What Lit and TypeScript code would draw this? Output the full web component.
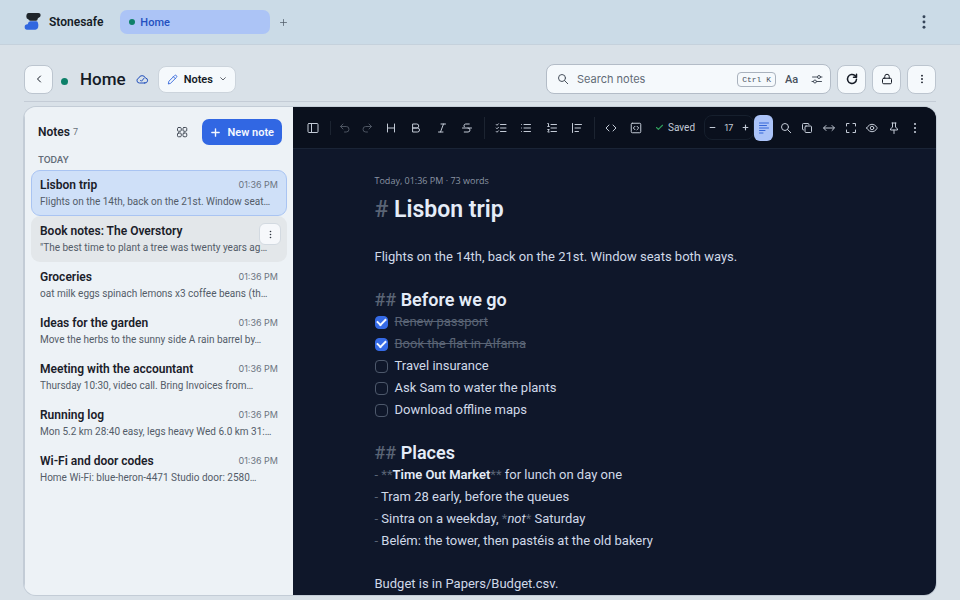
import { LitElement, html, css, svg, nothing } from "lit";
import { customElement, property } from "lit/decorators.js";

const ICONS: Record<string, unknown> = {
  back: svg`<path d="M15 18l-6-6 6-6"/>`,
  down: svg`<path d="M5 8l7 7 7-7"/>`,
  plus: svg`<path d="M12 4v16M4 12h16"/>`,
  minus: svg`<path d="M4 12h16"/>`,
  check: svg`<path d="M20 6L9 17l-5-5"/>`,
  dots: svg`<g fill="currentColor" stroke="none"><circle cx="12" cy="4" r="2.200"/><circle cx="12" cy="12" r="2.200"/><circle cx="12" cy="20" r="2.200"/></g>`,
  cloud: svg`<path d="M17.500 20H7a5 5 0 0 1-1.500-9.800A7 7 0 0 1 18.800 10a5 5 0 0 1-1.300 10z"/><path d="M9 14.500l2 2 5-6"/>`,
  pencil: svg`<path d="M3 21l1.200-5.200L16.500 3.500a2.500 2.500 0 0 1 4 4L8.200 19.800z"/><path d="M14 6l4 4"/>`,
  search: svg`<circle cx="10" cy="10" r="7"/><path d="M21.500 21.500L15 15"/>`,
  sliders: svg`<path d="M3 8h10M19 8h3M2 17h3M11 17h10"/><circle cx="16" cy="8" r="3"/><circle cx="8" cy="17" r="3"/>`,
  refresh: svg`<path d="M21 12.500A9 9 0 1 1 18 5.300l2 2"/><path d="M21 2.500v6h-6"/>`,
  lock: svg`<rect x="3" y="10.500" width="18" height="11" rx="2.500"/><path d="M7.500 10.500V7a4.500 4.500 0 0 1 9 0v3.500"/>`,
  grid: svg`<rect x="3" y="3" width="7.500" height="7.500" rx="2"/><rect x="14" y="3" width="7.500" height="7.500" rx="2"/><rect x="3" y="14" width="7.500" height="7.500" rx="2"/><rect x="14" y="14" width="7.500" height="7.500" rx="2"/>`,
  panel: svg`<rect x="2" y="3" width="20" height="18" rx="2"/><path d="M9 3v18"/>`,
  undo: svg`<path d="M8 14L3 9l5-5"/><path d="M3 9h11.500a5.500 5.500 0 0 1 0 11H11"/>`,
  redo: svg`<path d="M16 14l5-5-5-5"/><path d="M21 9H9.500a5.500 5.500 0 0 0 0 11H13"/>`,
  heading: svg`<path d="M5 4v16M19 4v16M5 12h14"/>`,
  bold: svg`<path d="M6 4h7.500a4 4 0 0 1 0 8H6zM6 12h9a4 4 0 0 1 0 8H6z"/>`,
  italic: svg`<path d="M19 4h-9M14 20H5M15 4L9 20"/>`,
  strike: svg`<path d="M16.500 4H9.500a3.500 3.500 0 0 0-3 5.500M14 12a4 4 0 0 1 0 8H6.500M3 12h18"/>`,
  tasks: svg`<path d="M11 5h11M11 12h11M11 19h11M2.500 5l1.500 1.500 3-3M2.500 12l1.500 1.500 3-3M2.500 19l1.500 1.500 3-3"/>`,
  bullets: svg`<path d="M8 5h13M8 12h13M8 19h13M3 5h.01M3 12h.01M3 19h.01"/>`,
  numbers: svg`<path d="M10 5h11M10 12h11M10 19h11M3.500 3H5v6M3.500 9h3M3.500 15h3L3.500 20h3"/>`,
  quote: svg`<path d="M3 3v18M8 5h13M8 12h11M8 19h7"/>`,
  code: svg`<path d="M8 6l-6 6 6 6M16 6l6 6-6 6"/>`,
  block: svg`<rect x="2.500" y="2.500" width="19" height="19" rx="2"/><path d="M10 8.500L6.500 12l3.500 3.500M14 8.500l3.500 3.500-3.500 3.500"/>`,
  align: svg`<path d="M3 2h18M3 7h14M3 12h18M3 17h11M3 22h7"/>`,
  copy: svg`<rect x="8" y="8" width="13" height="13" rx="2"/><path d="M5 16a2 2 0 0 1-2-2V5a2 2 0 0 1 2-2h9a2 2 0 0 1 2 2"/>`,
  width: svg`<path d="M2 12h20M6 7l-5 5 5 5M18 7l5 5-5 5"/>`,
  expand: svg`<path d="M3 8V3h5M16 3h5v5M21 16v5h-5M8 21H3v-5"/>`,
  eye: svg`<path d="M1.500 12S5 4.500 12 4.500 22.500 12 22.500 12 19 19.500 12 19.500 1.500 12 1.500 12z"/><circle cx="12" cy="12" r="3.500"/>`,
  pin: svg`<path d="M12 16v7M8 2h8M9 2v8l-4 4v2h14v-2l-4-4V2"/>`,
};

@customElement("ui-icon")
class UiIcon extends LitElement {
  @property() name = "";
  static styles = css`
    :host { display: block; width: 12px; height: 12px; flex: none; }
    svg { display: block; width: 100%; height: 100%; fill: none; stroke: currentColor; overflow: visible;
      stroke-width: var(--stroke, 2); stroke-linecap: round; stroke-linejoin: round; }
  `;
  render() {
    return html`<svg viewBox="0 0 24 24" aria-hidden="true">${ICONS[this.name]}</svg>`;
  }
}

interface Note { title: string; text: string; state?: string }

const NOTES: Note[] = [
  { title: "Lisbon trip", text: "Flights on the 14th, back on the 21st. Window seat…", state: "selected" },
  { title: "Book notes: The Overstory", text: "\"The best time to plant a tree was twenty years ag…", state: "hovered" },
  { title: "Groceries", text: "oat milk eggs spinach lemons x3 coffee beans (th…" },
  { title: "Ideas for the garden", text: "Move the herbs to the sunny side A rain barrel by…" },
  { title: "Meeting with the accountant", text: "Thursday 10:30, video call. Bring Invoices from…" },
  { title: "Running log", text: "Mon 5.2 km 28:40 easy, legs heavy Wed 6.0 km 31:…" },
  { title: "Wi-Fi and door codes", text: "Home Wi-Fi: blue-heron-4471 Studio door: 2580…" },
];

const TASKS: [string, boolean][] = [
  ["Renew passport", true],
  ["Book the flat in Alfama", true],
  ["Travel insurance", false],
  ["Ask Sam to water the plants", false],
  ["Download offline maps", false],
];

const tool = (name: string, label: string, cls = "") =>
  html`<button class="tool ${cls}" aria-label=${label} ?disabled=${cls === "off"}><ui-icon name=${name}></ui-icon></button>`;

@customElement("note-list")
class NoteList extends LitElement {
  static styles = css`
    :host { display: block; background: #edf2f6; color: #1a2029; border-left: 1px solid #c3ccd6; }
    * { box-sizing: border-box; }
    button { font: inherit; color: inherit; border: 0; background: none; padding: 0; margin: 0; }
    .head { display: flex; align-items: center; padding: 12px 11px 0 13px; }
    h2 { margin: 0; font-size: 12px; font-weight: 600; }
    .count { margin-left: 3px; font-size: 9px; color: #68717c; }
    .grid { margin-left: auto; width: 26px; height: 26px; display: grid; place-items: center; color: #434b57; }
    .new { margin-left: 7px; height: 26px; padding: 0 8px; display: flex; align-items: center; gap: 6px;
      border-radius: 7px; background: #3167e3; color: #f4f8ff; font-size: 11px; font-weight: 600; --stroke: 3; }
    .new ui-icon { width: 11px; height: 11px; }
    h3 { margin: 9px 13px 4px; font: 600 9px/12px Inter, sans-serif; color: #636c78; }
    ul { list-style: none; margin: 0; padding: 0 6px; }
    li { position: relative; padding: 7px 8px 6px; border: 1px solid transparent; border-radius: 9px; }
    .selected { background: #cfe0f8; border-color: #a9c4f2; }
    .hovered { background: #e3e7ea; }
    .row { display: flex; align-items: center; justify-content: space-between; margin-bottom: 3px; }
    .title { font-size: 12px; line-height: 14px; font-weight: 600; }
    time { font: 9px/14px Inter, sans-serif; color: #6b7481; }
    .text { font-size: 10px; line-height: 14px; color: #535c68; white-space: nowrap; overflow: hidden; margin: 0; }
    .more { position: absolute; right: 5px; top: 6px; width: 22px; height: 22px; display: grid; place-items: center;
      border: 1px solid #d3dae1; border-radius: 6px; background: #f6f8fb; color: #323943; }
    .more ui-icon { width: 9px; height: 9px; }
  `;
  render() {
    return html`
      <div class="head">
        <h2>Notes</h2><span class="count">7</span>
        <button class="grid" aria-label="Grid view"><ui-icon name="grid"></ui-icon></button>
        <button class="new"><ui-icon name="plus"></ui-icon>New note</button>
      </div>
      <h3>TODAY</h3>
      <ul>
        ${NOTES.map((n) => html`
          <li class=${n.state ?? ""}>
            <div class="row">
              <span class="title">${n.title}</span>
              ${n.state === "hovered" ? nothing : html`<time>01:36 PM</time>`}
            </div>
            <p class="text">${n.text}</p>
            ${n.state === "hovered"
              ? html`<button class="more" aria-label="Note actions"><ui-icon name="dots"></ui-icon></button>`
              : nothing}
          </li>`)}
      </ul>`;
  }
}

@customElement("note-editor")
class NoteEditor extends LitElement {
  static styles = css`
    :host { display: block; background: #0f172a; color: #cfd9e8; min-width: 0; }
    * { box-sizing: border-box; }
    button { font: inherit; color: inherit; border: 0; background: none; padding: 0; margin: 0; }
    .bar { display: flex; align-items: center; height: 42px; padding: 0 10px 0 7px; background: #0a101d;
      border-bottom: 1px solid #1a2436; color: #c3cad6; }
    .tool { flex: 1; height: 26px; display: grid; place-items: center; }
    .off { color: #4d5562; }
    .one { display: flex; width: 26px; }
    .pair { display: flex; width: 44px; }
    .four { display: flex; width: 102px; }
    .two { display: flex; width: 51px; }
    .seven { display: flex; width: 151px; margin-left: 2px; }
    .sep { width: 1px; height: 22px; margin: 0 3px 0 4px; background: #1c2431; }
    .short { height: 14px; }
    .saved { display: flex; align-items: center; gap: 4px; margin-left: 6px; font-size: 10px; }
    .saved ui-icon { width: 9px; height: 9px; color: #2f9e5b; --stroke: 3; }
    .size { display: flex; align-items: center; justify-content: space-between; width: 50px; height: 25px;
      margin-left: auto; padding: 0 4px; border: 1px solid #161f2d; border-radius: 8px; font: 9px Inter, sans-serif; }
    .size ui-icon { width: 7px; height: 7px; --stroke: 4; }
    .on { flex: none; width: 19px; border-radius: 6px; background: #abc3f8; color: #3566d8; }
    article { width: 480px; max-width: 100%; margin: 0 auto; padding-top: 25px; font-size: 13px; line-height: 22px; }
    .meta { margin: 0; font: 9px/14px "Open Sans", sans-serif; color: #8a94a3; }
    h1, h2, p, ul { margin: 0; padding: 0; font-weight: 400; }
    h1 { margin: 8px 0 22px; font-size: 23px; line-height: 28px; font-weight: 600; color: #e4ecf8; }
    h2 { margin-top: 21px; font-size: 18px; line-height: 22px; font-weight: 600; color: #e4ecf8; }
    .last { margin-top: 21px; }
    .mark { color: #5a6475; font-weight: 400; }
    h1 .mark, h2 .mark { font-weight: 500; }
    strong { font-weight: 600; color: #e4ecf8; }
    ul { list-style: none; }
    .task { display: flex; align-items: center; gap: 7px; height: 22px; }
    .done { color: #5a6475; text-decoration: line-through; }
    input { appearance: none; flex: none; width: 13px; height: 13px; margin: 0; display: grid; place-items: center;
      border: 1px solid #4d586b; border-radius: 4px; }
    input:checked { background: #356ae6; border-color: #356ae6; }
    input:checked::before { content: ""; width: 7px; height: 4px; margin-bottom: 2px; border: solid #f4f8ff;
      border-width: 0 0 2px 2px; transform: rotate(-45deg); }
  `;
  render() {
    return html`
      <div class="bar" role="toolbar">
        <div class="one">${tool("panel", "Toggle list")}</div>
        <span class="sep short"></span>
        <div class="pair">${tool("undo", "Undo", "off")}${tool("redo", "Redo", "off")}</div>
        <div class="four">${tool("heading", "Heading")}${tool("bold", "Bold")}${tool("italic", "Italic")}${tool("strike", "Strikethrough")}</div>
        <span class="sep"></span>
        <div class="four">${tool("tasks", "Task list")}${tool("bullets", "Bulleted list")}${tool("numbers", "Numbered list")}${tool("quote", "Quote")}</div>
        <span class="sep"></span>
        <div class="two">${tool("code", "Code")}${tool("block", "Code block")}</div>
        <span class="saved"><ui-icon name="check"></ui-icon>Saved</span>
        <div class="size">
          <button aria-label="Smaller text"><ui-icon name="minus"></ui-icon></button>17
          <button aria-label="Larger text"><ui-icon name="plus"></ui-icon></button>
        </div>
        ${tool("align", "Formatted view", "on")}
        <div class="seven">
          ${tool("search", "Find")}${tool("copy", "Copy")}${tool("width", "Full width")}${tool("expand", "Full screen")}
          ${tool("eye", "Preview")}${tool("pin", "Pin")}${tool("dots", "More")}
        </div>
      </div>
      <article>
        <p class="meta">Today, 01:36 PM · 73 words</p>
        <h1><span class="mark">#</span> Lisbon trip</h1>
        <p>Flights on the 14th, back on the 21st. Window seats both ways.</p>
        <h2><span class="mark">##</span> Before we go</h2>
        <ul>
          ${TASKS.map(([text, done]) => html`
            <li><label class="task"><input type="checkbox" .checked=${done} /><span class=${done ? "done" : ""}>${text}</span></label></li>`)}
        </ul>
        <h2><span class="mark">##</span> Places</h2>
        <ul>
          <li><span class="mark">- **</span><strong>Time Out Market</strong><span class="mark">**</span> for lunch on day one</li>
          <li><span class="mark">-</span> Tram 28 early, before the queues</li>
          <li><span class="mark">-</span> Sintra on a weekday, <span class="mark">*</span><em>not</em><span class="mark">*</span> Saturday</li>
          <li><span class="mark">-</span> Belém: the tower, then pastéis at the old bakery</li>
        </ul>
        <p class="last">Budget is in Papers/Budget.csv.</p>
      </article>`;
  }
}

@customElement("app-root")
class AppRoot extends LitElement {
  static styles = css`
    :host { display: flex; flex-direction: column; min-height: 100vh; background: #d9e1e8; color: #151b26;
      font-family: Roboto, sans-serif; }
    * { box-sizing: border-box; }
    button { font: inherit; color: inherit; border: 0; background: none; padding: 0; margin: 0; }
    .top { display: flex; align-items: center; height: 45px; padding: 0 24px; background: #cbdbe7;
      border-bottom: 1px solid #c5d1dc; }
    .logo { width: 17px; height: 18px; margin-bottom: 2px; }
    .brand { margin: 0 17px 0 8px; font-size: 12px; font-weight: 600; }
    .tab { display: flex; align-items: center; gap: 5px; width: 150px; height: 24px; padding: 0 9px;
      border-radius: 7px; background: #acc4f6; color: #2450c0; font-size: 11px; font-weight: 500; }
    .dot { width: 6px; height: 6px; border-radius: 50%; background: #0d8069; }
    .add { margin-left: 9px; color: #505c6a; }
    .add ui-icon { width: 9px; height: 9px; }
    .menu { margin-left: auto; width: 24px; height: 24px; display: grid; place-items: center; color: #364559; }
    .menu ui-icon { width: 16px; height: 16px; }
    header { display: flex; align-items: center; gap: 6px; margin: 0 24px; padding: 19px 0 7px;
      border-bottom: 1px solid #c4ccd6; }
    .square { width: 29px; height: 29px; display: grid; place-items: center; border: 1px solid #bcc5cf;
      border-radius: 8px; background: #f5f9fc; }
    .big { width: 7px; height: 7px; margin: 4px 6px 0 2px; }
    h1 { margin: 0; font-size: 17px; line-height: 22px; font-weight: 500; }
    .sync { margin-left: 4px; color: #2351bd; }
    .kind { display: flex; align-items: center; gap: 6px; height: 27px; padding: 0 8px; margin-left: 4px;
      border: 1px solid #ccd4dc; border-radius: 8px; background: #f5f9fc; font-size: 11px; font-weight: 600; }
    .kind ui-icon { width: 8px; height: 8px; }
    .kind .pen { width: 11px; height: 11px; color: #3568dc; }
    .search { display: flex; align-items: center; width: 285px; height: 30px; margin-left: auto; padding: 0 3px 0 10px;
      border: 1px solid #b3bcc7; border-radius: 8px; background: #f5f9fc; color: #48515d; }
    input { flex: 1; min-width: 0; margin: 0 0 0 8px; padding: 0; border: 0; outline: 0; background: none;
      font: 11px Inter, sans-serif; color: inherit; }
    input::placeholder { color: #626b77; }
    kbd { padding: 0 4px; border: 1px solid #a9b2bd; border-radius: 4px; font: 8px/13px "Liberation Mono", monospace; }
    .case { width: 31px; text-align: center; font-size: 11px; font-weight: 500; }
    .filter { width: 20px; height: 20px; display: grid; place-items: center; }
    .tiny { width: 10px; height: 10px; }
    .heavy { --stroke: 3; }
    main { flex: 1; display: grid; grid-template-columns: 269px 1fr; margin: 5px 24px; border-radius: 12px;
      overflow: hidden; box-shadow: 0 0 0 1px #c3ccd6; }
  `;
  render() {
    return html`
      <nav class="top">
        <svg class="logo" viewBox="0 0 51 54" aria-hidden="true">
          <path fill="#1f252b" d="M14 3h29q7 0 7 6t-6 8q-3 1-3 4 0 5-5 5H19q-5 0-6-4-6-2-6-8 0-11 7-11z"/>
          <path fill="#3167df" d="M19 28h18q5 0 5 6 1 2 1 6 0 13-9 13H9q-7 0-7-8t8-8h1q2-9 8-9z"/>
        </svg>
        <span class="brand">Stonesafe</span>
        <button class="tab"><span class="dot"></span>Home</button>
        <button class="add" aria-label="New tab"><ui-icon name="plus"></ui-icon></button>
        <button class="menu" aria-label="Menu"><ui-icon name="dots"></ui-icon></button>
      </nav>
      <header>
        <button class="square" aria-label="Back"><ui-icon name="back"></ui-icon></button>
        <span class="dot big"></span>
        <h1>Home</h1>
        <ui-icon name="cloud" class="sync"></ui-icon>
        <button class="kind"><ui-icon name="pencil" class="pen"></ui-icon>Notes<ui-icon name="down"></ui-icon></button>
        <div class="search">
          <ui-icon name="search"></ui-icon>
          <input type="search" placeholder="Search notes" aria-label="Search notes" />
          <kbd>Ctrl K</kbd>
          <button class="case" aria-label="Match case">Aa</button>
          <button class="filter" aria-label="Filters"><ui-icon name="sliders"></ui-icon></button>
        </div>
        <button class="square" aria-label="Refresh"><ui-icon name="refresh" class="heavy"></ui-icon></button>
        <button class="square" aria-label="Lock"><ui-icon name="lock"></ui-icon></button>
        <button class="square" aria-label="More"><ui-icon name="dots" class="tiny"></ui-icon></button>
      </header>
      <main>
        <note-list></note-list>
        <note-editor></note-editor>
      </main>`;
  }
}
